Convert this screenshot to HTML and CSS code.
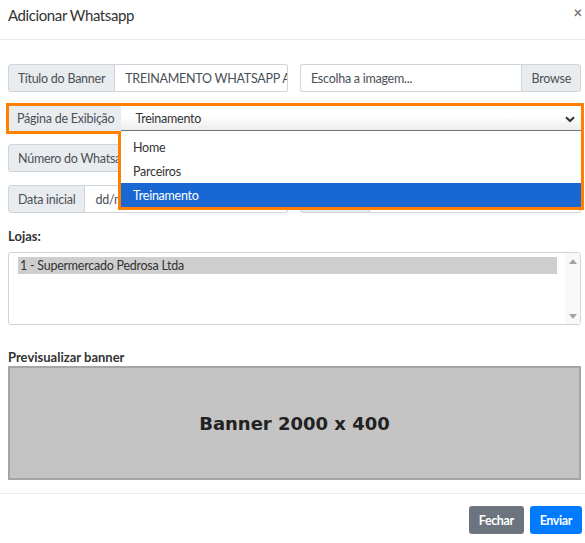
FILE: index.html
```html
<!DOCTYPE html>
<html lang="pt">
<head>
<meta charset="utf-8">
<link rel="stylesheet" href="styles.css">
</head>
<body>
<div class="modal">
  <div class="modal-header">
    <h5 class="modal-title">Adicionar Whatsapp</h5>
    <span class="close">&times;</span>
  </div>
  <div class="modal-body">
    <div class="form-grid">
      <div class="input-group">
        <span class="addon">Título do Banner</span>
        <span class="control">TREINAMENTO WHATSAPP APLI</span>
      </div>
      <div class="input-group file">
        <span class="control">Escolha a imagem...</span>
        <span class="browse">Browse</span>
      </div>
      <div class="input-group full select-row">
        <span class="addon">Página de Exibição</span>
        <span class="select">Treinamento
          <svg class="chev" width="10" height="7" viewBox="0 0 10 7"><path d="M1 1.2 L5 5 L9 1.2" fill="none" stroke="#333" stroke-width="2"/></svg>
        </span>
      </div>
      <div class="input-group">
        <span class="addon">Número do Whatsapp</span>
        <span class="control"></span>
      </div>
      <div class="input-group">
        <span class="addon">Link</span>
        <span class="control"></span>
      </div>
      <div class="input-group">
        <span class="addon">Data inicial</span>
        <span class="control">dd/m</span>
      </div>
      <div class="input-group">
        <span class="addon">Data final</span>
        <span class="control"></span>
      </div>
    </div>

    <div class="section-label lojas-label">Lojas:</div>
    <div class="multi">
      <div class="multi-list">
        <div class="multi-item">1 - Supermercado Pedrosa Ltda</div>
      </div>
      <div class="scrollbar">
        <span class="arrow up"></span>
        <span class="arrow down"></span>
      </div>
    </div>

    <div class="section-label preview-label">Previsualizar banner</div>
    <div class="banner">Banner 2000 x 400</div>
  </div>
  <div class="modal-footer">
    <button class="btn btn-secondary">Fechar</button>
    <button class="btn btn-primary">Enviar</button>
  </div>

  <ul class="dropdown">
    <li>Home</li>
    <li>Parceiros</li>
    <li class="selected">Treinamento</li>
  </ul>
  <svg class="highlight" width="585" height="543" viewBox="0 0 585 543">
    <path d="M7.5 104.5 H582.5 V208.5 H119.5 V132.5 H7.5 Z" fill="none" stroke="#ff7f00" stroke-width="3"/>
  </svg>
</div>
</body>
</html>
```

FILE: styles.css
```css
* { box-sizing: border-box; }
html, body { margin: 0; padding: 0; background: #fff; }
body {
  font-family: "Lato", "Liberation Sans", sans-serif;
  color: #495057;
  font-size: 12.5px;
  letter-spacing: -0.25px;
}
.modal { position: relative; width: 585px; height: 543px; overflow: hidden; }
.modal-header {
  height: 40px;
  padding: 0 3px 0 8px;
  display: flex;
  align-items: center;
  justify-content: space-between;
  border-bottom: 1px solid #e9ecef;
}
.modal-title {
  margin: 0;
  font-size: 15px;
  letter-spacing: -0.4px;
  font-weight: 400;
  color: #333;
  position: relative;
  top: -5px;
}
.close { font-size: 15px; color: #777; font-weight: 700; position: relative; top: -8px; }
.modal-body { padding: 24px 4px 0 8px; }
.form-grid {
  display: grid;
  grid-template-columns: 280px 281px;
  column-gap: 12px;
  row-gap: 13px;
}
.input-group {
  display: flex;
  height: 28px;
}
.input-group.full { grid-column: 1 / 3; }
.addon {
  background: #e9ecef;
  border: 1px solid #ced4da;
  border-radius: 3px 0 0 3px;
  padding: 0 9px;
  display: flex;
  align-items: center;
  white-space: nowrap;
}
.control {
  flex: 1;
  border: 1px solid #ced4da;
  border-left: none;
  border-radius: 0 3px 3px 0;
  padding: 0 10px;
  display: flex;
  align-items: center;
  white-space: nowrap;
  overflow: hidden;
  min-width: 0;
}
.file .control { border-left: 1px solid #ced4da; border-radius: 3px 0 0 3px; border-right: none; }
.browse {
  background: #e9ecef;
  border: 1px solid #ced4da;
  border-radius: 0 3px 3px 0;
  padding: 0 9px;
  display: flex;
  align-items: center;
}
.select-row { height: 26px; }
.select-row .addon { border-radius: 0; border-color: #e9ecef; padding: 0 6px 0 8px; }
.select {
  flex: 1;
  display: flex;
  align-items: center;
  justify-content: space-between;
  padding: 2px 6px 0 14px;
  background: linear-gradient(#ffffff 45%, #ececec);
  border-bottom: 1px solid #6c7680;
  color: #333;
}
.chev { margin-top: 1px; }
.section-label { font-weight: 700; color: #333; font-size: 13px; letter-spacing: 0; }
.lojas-label { margin-top: 16px; height: 15px; line-height: 15px; }
.multi {
  margin-top: 8px;
  height: 73px;
  border: 1px solid #ced4da;
  border-radius: 3px;
  display: flex;
  padding: 4px 0 0 9px;
}
.multi-list { flex: 1; padding-right: 8px; }
.multi-item {
  background: #cecece;
  color: #333;
  height: 17px;
  line-height: 17px;
  padding-left: 2px;
}
.scrollbar {
  width: 15px;
  margin-top: -4px;
  background: #f8f8f8;
  display: flex;
  flex-direction: column;
  justify-content: space-between;
  align-items: center;
  padding: 6px 0 5px;
}
.arrow { width: 0; height: 0; border-left: 4px solid transparent; border-right: 4px solid transparent; }
.arrow.up { border-bottom: 5px solid #a3a3a3; }
.arrow.down { border-top: 5px solid #a3a3a3; }
.preview-label { margin-top: 25px; height: 15px; line-height: 15px; }
.banner {
  margin-top: 1px;
  height: 114px;
  background: #c4c4c4;
  border: 2px solid #a5a5a5;
  display: flex;
  align-items: center;
  justify-content: center;
  font-family: "DejaVu Sans", sans-serif;
  font-weight: 700;
  font-size: 18px;
  letter-spacing: 0;
  color: #222;
}
.modal-footer {
  margin-top: 13px;
  border-top: 1px solid #e9ecef;
  padding: 12px 3px 0 8px;
  display: flex;
  justify-content: flex-end;
  gap: 6px;
}
.btn {
  height: 28px;
  border: none;
  border-radius: 3px;
  color: #fff;
  font-family: inherit;
  font-size: 12.5px;
  letter-spacing: -0.4px;
  font-weight: 700;
  padding: 0 10px;
}
.btn-secondary { background: #6c757d; }
.btn-primary { background: #007bff; }
.dropdown {
  position: absolute;
  left: 121px;
  top: 133px;
  width: 460px;
  margin: 0;
  padding: 0;
  list-style: none;
  background: #fff;
  color: #333;
}
.dropdown li { height: 24px; line-height: 24px; padding-left: 12px; }
.dropdown li:first-child { margin-top: 2px; }
.dropdown li:last-child { height: 25px; line-height: 26px; }
.dropdown li:nth-child(-n+2) { line-height: 26px; }
.dropdown li.selected { background: #1967d2; color: #fff; }
.highlight { position: absolute; left: 0; top: 0; pointer-events: none; }
```
